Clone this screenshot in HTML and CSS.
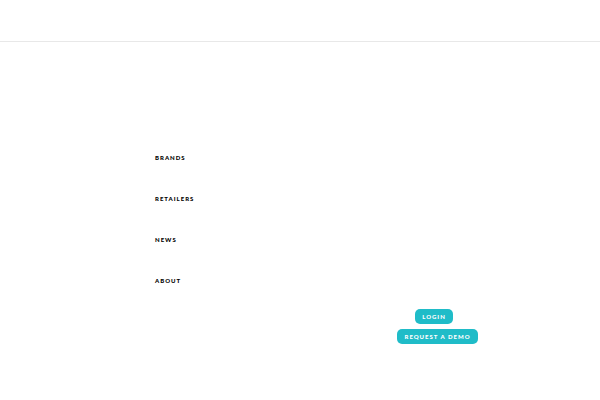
FILE: index.html
```html
<!DOCTYPE html>
<html lang="en">
<head>
<meta charset="utf-8">
<meta name="viewport" content="width=device-width, initial-scale=1">
<title>Menu</title>
<link rel="stylesheet" href="styles.css">
</head>
<body>
<header class="topbar"></header>
<main class="menu">
  <nav class="links">
    <a href="#">BRANDS</a>
    <a href="#">RETAILERS</a>
    <a href="#">NEWS</a>
    <a href="#">ABOUT</a>
  </nav>
  <div class="actions">
    <a class="button" href="#">LOGIN</a>
    <a class="button" href="#">REQUEST A DEMO</a>
  </div>
</main>
</body>
</html>
```

FILE: styles.css
```css
* {
  box-sizing: border-box;
}

body {
  margin: 0;
  background: #fff;
  color: #000;
  font-family: Lato, "Liberation Sans", sans-serif;
}

.topbar {
  height: 42px;
  border-bottom: 1px solid #e8e8e8;
}

.menu {
  display: grid;
  grid-template-columns: 1fr 1fr;
  align-items: end;
  padding: 108px 25px 56px;
}

.links {
  display: flex;
  flex-direction: column;
  align-items: flex-start;
  gap: 25px;
  padding: 0 0 55px 130px;
}

.links a {
  color: inherit;
  font-size: 6px;
  font-weight: 900;
  line-height: 16px;
  letter-spacing: 1px;
  text-decoration: none;
}

.actions {
  display: flex;
  flex-direction: column;
  align-items: center;
  gap: 5px;
}

.button {
  padding: 0 7px;
  border-radius: 5px;
  background: #1fbcc8;
  color: #fff;
  font-size: 6px;
  font-weight: 900;
  line-height: 15px;
  letter-spacing: 1px;
  text-decoration: none;
}

.button:not(:last-child) {
  margin-right: 7px;
}
```
